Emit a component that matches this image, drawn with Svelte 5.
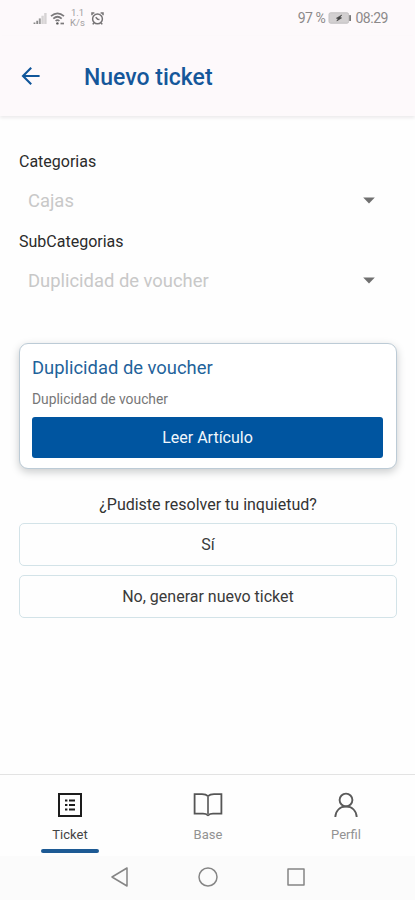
<script>
  let category = "Cajas";
  let subcategory = "Duplicidad de voucher";
  let active = "Ticket";

  let fields = [
    { id: "cat", label: "Categorias", value: category },
    { id: "subcat", label: "SubCategorias", value: subcategory },
  ];

  let tabs = ["Ticket", "Base", "Perfil"];
</script>

<div class="screen">
  <!-- Status bar -->
  <div class="status">
    <div class="status-left">
      <svg width="14" height="13" viewBox="0 0 14 13">
        <path d="M1.5 12V10.4M4.2 12V8.8" stroke="#888" stroke-width="1.8" />
        <path d="M6.8 12V6.4" stroke="#999" stroke-width="2" />
        <path d="M9.6 12V3.8M12.4 12V1" stroke="#d6d3d4" stroke-width="2.4" />
      </svg>
      <svg class="wifi" width="16" height="13" viewBox="0 0 16 13" fill="none" stroke="#7c7a7c" stroke-width="1.7">
        <path d="M1 4.2Q7.5 -1.6 14 4.2M3.3 6.7Q7.5 2.8 11.7 6.7M5.6 9Q7.5 7.2 9.4 9" />
        <circle cx="7.4" cy="11.4" r="1.2" fill="#555" stroke="none" />
        <path d="M10.5 11.5H14" />
      </svg>
      <div class="speed"><span>1.1</span><span>K/s</span></div>
      <svg class="alarm" width="13" height="13" viewBox="0 0 13 13" fill="none" stroke="#757374" stroke-width="1.5">
        <circle cx="6.5" cy="6.9" r="4.9" />
        <path d="M1 3.2V1H3.4M9.6 1H12V3.2M4.7 5.2L6.7 7.3L8.5 7.5M2.8 11L1.8 12.4M10.2 11L11.2 12.4" />
      </svg>
    </div>
    <div class="status-right">
      <span>97 %</span>
      <svg width="24" height="12" viewBox="0 0 24 12">
        <rect x="1" y="0.8" width="19.6" height="10.4" rx="1.6" fill="#d3d0d1" stroke="#c3c0c1" />
        <rect x="21.2" y="3" width="1.8" height="6" rx="0.6" fill="#777" />
        <path d="M13.8 3L8.4 6.2L10.2 6.8L8.8 9L13.6 5.9L11.8 5.3Z" fill="#444" stroke="#444" stroke-width="0.6" />
      </svg>
      <span>08:29</span>
    </div>
  </div>

  <!-- Header -->
  <header>
    <svg width="20" height="20" viewBox="0 0 20 20" fill="none" stroke="#10569a" stroke-width="2.1">
      <path d="M18.6 10H2.2M10.2 1.8L2 10L10.2 18.2" />
    </svg>
    <h1>Nuevo ticket</h1>
  </header>

  <main>
    <!-- Category pickers -->
    {#each fields as f}
      <div class="field">
        <div class="label">{f.label}</div>
        <div class="picker" id={f.id}>
          <span>{f.value}</span>
          <svg width="12" height="7" viewBox="0 0 12 7">
            <path d="M0.2 0.5H11.8L6 6.5Z" fill="#707070" />
          </svg>
        </div>
      </div>
    {/each}

    <!-- Suggested article -->
    <div class="card">
      <h2>{subcategory}</h2>
      <p>{subcategory}</p>
      <button class="primary-button">Leer Artículo</button>
    </div>

    <div class="question">¿Pudiste resolver tu inquietud?</div>
    <button class="outline-button yes">Sí</button>
    <button class="outline-button">No, generar nuevo ticket</button>
  </main>

  <!-- Tabs -->
  <nav>
    {#each tabs as tab}
      <button class="tab" class:active={tab === active} on:click={() => (active = tab)}>
        {#if tab === "Ticket"}
          <svg width="28" height="26" viewBox="0 0 28 26" fill="none" stroke="#1c1c1c">
            <rect x="3" y="2" width="22" height="22" stroke-width="2" />
            <path d="M9 8.5H11.4M9 13H11.4M9 17.5H11.4M13 8.5H19M13 13H19M13 17.5H19" stroke-width="1.8" />
          </svg>
        {:else if tab === "Base"}
          <svg width="30" height="26" viewBox="0 0 30 26" fill="none" stroke="#555" stroke-width="1.8">
            <path d="M15 4.2C13.4 2.6 11.5 2.2 9 2.2H1.6V21.6H10C12.2 21.6 13.8 22.2 15 23.2C16.2 22.2 17.8 21.6 20 21.6H28.4V2.2H21C18.5 2.2 16.6 2.6 15 4.2Z" />
            <path d="M15 4.5V23" stroke="#777" stroke-width="2" />
          </svg>
        {:else}
          <svg width="26" height="26" viewBox="0 0 26 26" fill="none" stroke="#5a5a5a" stroke-width="1.9">
            <circle cx="13" cy="8" r="6.4" />
            <path d="M2.3 25C2.8 18.5 7 14.5 13 14.5S23.2 18.5 23.7 25" />
          </svg>
        {/if}
        <span>{tab}</span>
        <i></i>
      </button>
    {/each}
  </nav>

  <!-- System buttons -->
  <div class="system">
    <svg width="20" height="22" viewBox="0 0 20 22"><path d="M17 2V20L2 11Z" /></svg>
    <svg width="20" height="22" viewBox="0 0 20 22"><circle cx="10" cy="11" r="9" /></svg>
    <svg width="20" height="22" viewBox="0 0 20 22"><rect x="2" y="3" width="16" height="16" /></svg>
  </div>
</div>

<style>
  :global(body) {
    background: #fefefe;
  }

  .screen {
    width: 415px;
    height: 900px;
    display: flex;
    flex-direction: column;
    overflow: hidden;
    background: #fefefe;
    font-family: Roboto, "Liberation Sans", sans-serif;
    color: #333;
  }

  button {
    font-family: inherit;
    padding: 0;
    cursor: pointer;
  }

  .status {
    height: 36px;
    box-sizing: border-box;
    padding: 0 27px 0 33px;
    display: flex;
    align-items: center;
    justify-content: space-between;
    background: #fdf9fb;
  }

  .status-left,
  .status-right {
    display: flex;
    align-items: center;
  }

  .wifi {
    margin-left: 3px;
  }

  .speed {
    width: 15px;
    margin-left: 4px;
    display: flex;
    flex-direction: column;
    align-items: center;
    font-size: 9.5px;
    line-height: 10px;
    color: #a19e9f;
  }

  .alarm {
    margin-left: 6px;
  }

  .status-right {
    gap: 3px;
    font-size: 14px;
    letter-spacing: -0.45px;
    color: #8c898a;
  }

  header {
    height: 80px;
    box-sizing: border-box;
    padding: 0 21px;
    display: flex;
    align-items: center;
    gap: 43px;
    background: #fdf9fb;
    box-shadow: 0 2px 3px #ecebec;
  }

  h1 {
    margin: 2px 0 0;
    font-size: 23px;
    font-weight: 500;
    color: #15579a;
  }

  main {
    flex: 1;
    padding: 32px 18px 0 19px;
    display: flex;
    flex-direction: column;
  }

  .field {
    height: 79.5px;
  }

  .label {
    font-size: 16px;
    line-height: 28px;
    color: #2b2b2b;
  }

  .picker {
    height: 49px;
    padding: 0 22px 0 9px;
    display: flex;
    align-items: center;
    justify-content: space-between;
    font-size: 18.4px;
    color: #c8c8c8;
  }

  .card {
    height: 126px;
    box-sizing: border-box;
    margin-top: 36px;
    padding: 10px 13px 0 12px;
    border: 1px solid #bccbd6;
    border-radius: 9px;
    background: #fff;
    box-shadow: 0 3px 8px #c9cbcc;
  }

  h2 {
    margin: 0;
    font-size: 18.4px;
    line-height: 28px;
    font-weight: 400;
    color: #1f639b;
  }

  p {
    margin: 6px 0 7px;
    font-size: 13.85px;
    line-height: 22px;
    color: #777;
  }

  .primary-button {
    display: block;
    width: 100%;
    height: 41px;
    border: none;
    border-radius: 3px;
    background: #0055a0;
    color: #f1f7fc;
    font-size: 16px;
  }

  .question {
    margin-top: 22px;
    line-height: 28px;
    font-size: 16px;
    text-align: center;
    color: #333;
  }

  .outline-button {
    height: 43px;
    margin-top: 9px;
    border: 1px solid #d3e3e8;
    border-radius: 5px;
    background: #fefefe;
    color: #3a3a3a;
    font-size: 16px;
  }

  .outline-button.yes {
    margin-top: 4px;
  }

  nav {
    height: 82px;
    box-sizing: border-box;
    padding-left: 1px;
    display: flex;
    border-top: 1px solid #e3e3e3;
  }

  .tab {
    flex: 1;
    border: none;
    background: none;
    display: flex;
    flex-direction: column;
    align-items: center;
    padding-top: 17px;
    font-size: 13px;
    color: #929292;
  }

  .tab span {
    line-height: 18px;
    margin-top: 8px;
  }

  .tab i {
    width: 58px;
    height: 4px;
    margin-top: 5px;
    border-radius: 2px;
  }

  .tab.active {
    color: #444;
  }

  .tab.active i {
    background: #1d5a94;
  }

  .system {
    height: 44px;
    display: flex;
    justify-content: center;
    gap: 68px;
    box-sizing: border-box;
    padding-top: 10px;
    background: #fbfbfb;
  }

  .system svg {
    fill: none;
    stroke: #858585;
    stroke-width: 1.5;
    stroke-linejoin: round;
  }
</style>
